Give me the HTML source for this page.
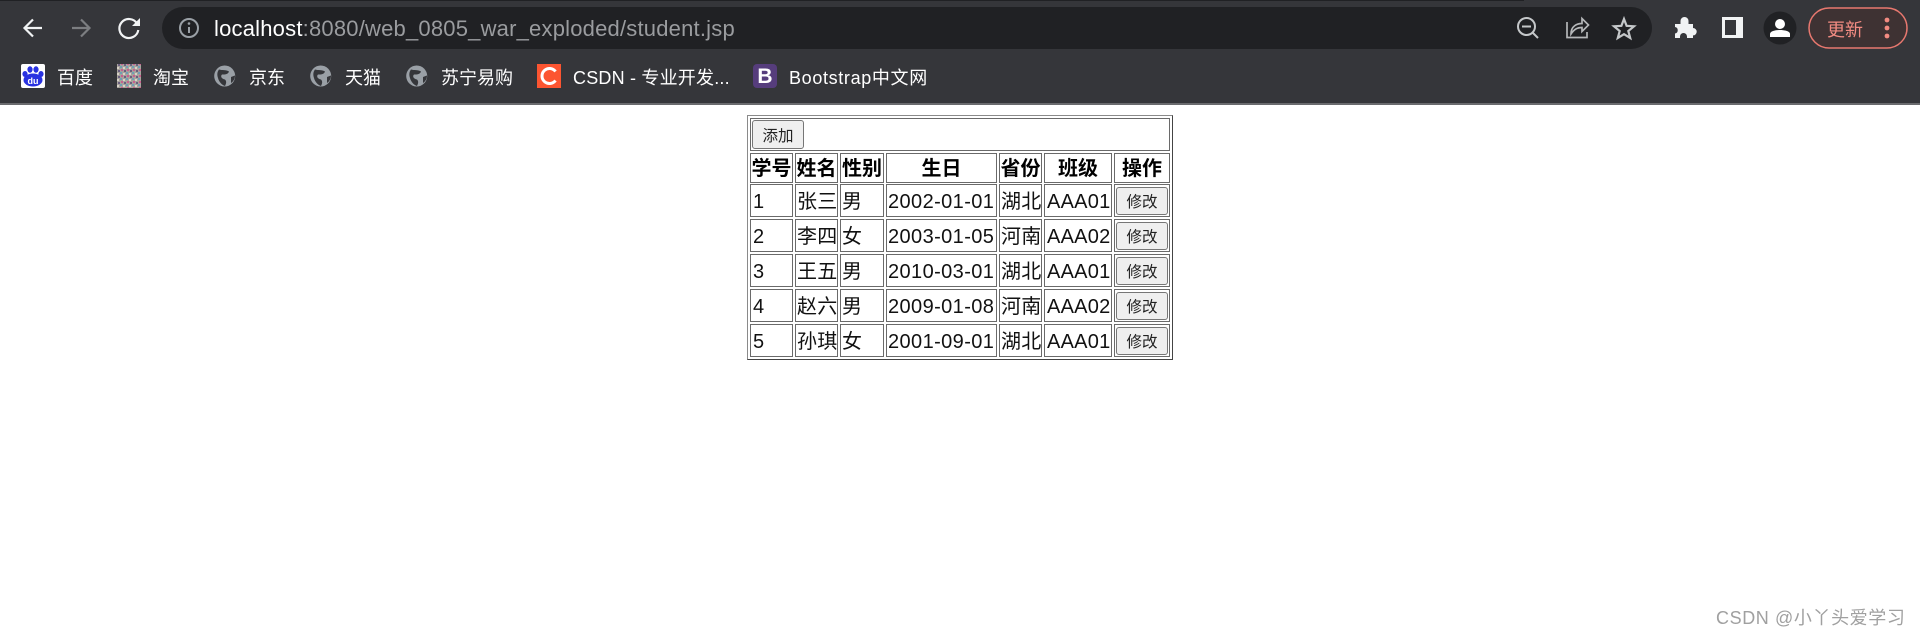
<!DOCTYPE html>
<html lang="zh"><head><meta charset="utf-8"><title>student</title>
<style>
html,body{margin:0;padding:0;background:#fff;width:1920px;height:636px;overflow:hidden}
body{position:relative;font-family:"Liberation Sans","Noto Sans CJK SC",sans-serif;color:#000}
.a{position:absolute}
.bm{position:absolute;top:66px;line-height:24px;font-size:18px;color:#fff;white-space:nowrap}
.c{position:absolute;box-sizing:border-box;border:1px solid #6a6a6a;font-size:20px;line-height:35px;padding-left:1px;white-space:nowrap;letter-spacing:.25px;color:#111}
.d{letter-spacing:.4px}
.n{padding-left:2px}
.h{font-weight:bold;text-align:center;padding:0;line-height:31px;letter-spacing:0;color:#000}
.b{position:absolute;box-sizing:border-box;background:#efefef;border:1px solid #767676;border-radius:3px;font-size:15.500px;text-align:center;color:#222}
</style></head><body>
<div class="a" style="left:0;top:0;width:1920px;height:103px;background:#35363a"></div>
<div class="a" style="left:0;top:0;width:1524px;height:1px;background:#202124"></div>
<div class="a" style="left:0;top:103px;width:1920px;height:2px;background:#6a6b6e"></div>
<div class="a" style="left:162px;top:7px;width:1490px;height:42px;background:#202124;border-radius:21px"></div>

<svg class="a" style="left:0;top:0" width="1920" height="103" fill="none">
<defs><pattern id="n" width="6" height="6" patternUnits="userSpaceOnUse"><rect width="6" height="6" fill="#a7a29c"/><rect width="2" height="2" fill="#6f9fb5"/><rect x="3" y="1" width="2" height="2" fill="#d8d2c8"/><rect x="1" y="3" width="2" height="2" fill="#c9608f"/><rect x="4" y="4" width="2" height="2" fill="#6a5f7f"/></pattern></defs>
<path d="M42 28H25M33 19.500L24.500 28L33 36.500" stroke="#f1f3f4" stroke-width="2.200"/>
<path d="M72 28H89M81 19.500L89.500 28L81 36.500" stroke="#7c7e81" stroke-width="2.200"/>
<path d="M137 23.500A9.500 9.500 0 1 0 138.300 30" stroke="#f1f3f4" stroke-width="2.200"/><path d="M140 18V26H132Z" fill="#f1f3f4"/>
<circle cx="189" cy="28" r="9" stroke="#9aa0a6" stroke-width="2"/><path d="M189 27V33" stroke="#9aa0a6" stroke-width="2"/><circle cx="189" cy="23.500" r="1.300" fill="#9aa0a6"/>
<circle cx="1526.500" cy="26.500" r="8.500" stroke="#c4c7c9" stroke-width="2"/><path d="M1522 26.500H1531M1532.500 32.500L1538 38" stroke="#c4c7c9" stroke-width="2"/>
<path d="M1567 22V37.500H1587V32" stroke="#b5b7b9" stroke-width="1.700"/><path d="M1571 34C1571 26 1577 23.500 1582 23.500V18.500L1588.500 25L1582 31.500V27.500C1577 27.500 1574 29.500 1571 34Z" stroke="#b5b7b9" stroke-width="1.700"/>
<path d="M1624 19L1626.600 25.800L1634 26.300L1628.300 31L1630.200 38L1624 34.200L1617.800 38L1619.700 31L1614 26.300L1621.400 25.800Z" stroke="#c4c7c9" stroke-width="2.200"/>
<path d="M1675 24H1680.500V21A4 4 0 0 1 1688.500 21V24H1693V28A3.700 3.700 0 0 1 1693 35.400V38H1687V36.500A3.500 3.500 0 0 0 1680 36.500V38H1675V33.500A3.300 3.300 0 0 0 1675 27Z" fill="#f1f3f4"/>
<path fill-rule="evenodd" d="M1722 17H1743V38H1722ZM1725 20V35H1736V20Z" fill="#f1f3f4"/>
<circle cx="1780" cy="28" r="16.500" fill="#202124"/><circle cx="1780" cy="24" r="5" fill="#fff"/><path d="M1770 37V34C1770 31 1776 30 1780 30C1784 30 1790 31 1790 34V37Z" fill="#fff"/>
<rect x="1809" y="8" width="98" height="40" rx="20" fill="#3e3233" stroke="#e8786f" stroke-width="1.500"/>
<circle cx="1887" cy="20" r="2.400" fill="#f28b82"/><circle cx="1887" cy="28" r="2.400" fill="#f28b82"/><circle cx="1887" cy="36" r="2.400" fill="#f28b82"/>
<rect x="21" y="64" width="24" height="24" rx="2" fill="#fff"/>
<ellipse cx="33" cy="80" rx="9.500" ry="6.500" fill="#2932e1"/><ellipse cx="25" cy="74" rx="2.600" ry="3" fill="#2932e1"/><ellipse cx="30" cy="69.500" rx="2.600" ry="3.200" fill="#2932e1"/><ellipse cx="36" cy="69.500" rx="2.600" ry="3.200" fill="#2932e1"/><ellipse cx="41" cy="74" rx="2.600" ry="3" fill="#2932e1"/>
<rect x="117" y="64" width="24" height="24" fill="url(#n)"/>
<g id="g"><circle cx="224.700" cy="76" r="10.500" fill="#9aa0a6"/><path d="M219 69.500C222 70.500 226 69.500 229 71.500C228 74.500 225 74.500 222 74.500C220 76.500 222 79 225 79.500C227 81.500 226 84 225 86C222 85 219 82 218 78C217 75 217 72 219 69.500ZM231 77L235 75.500C235 78 234 81 231 83Z" fill="#35363a"/></g>
<use href="#g" x="96"/><use href="#g" x="192"/>
<rect x="537" y="64" width="24" height="24" fill="#fc5531"/>
<path d="M555.500 71.500A7.500 7.500 0 1 0 555.500 80.500" stroke="#fff" stroke-width="3"/>
<rect x="753" y="64" width="24" height="24" rx="4" fill="#563d7c"/>
</svg>
<div class="a" style="left:27px;top:77px;width:12px;text-align:center;font-size:9px;line-height:9px;font-weight:bold;color:#fff">du</div>
<div class="a" style="left:753px;top:65px;width:24px;line-height:24px;text-align:center;font-size:21px;font-weight:bold;color:#fff">B</div>

<div class="a" style="left:214px;top:16px;font-size:22px;line-height:26px;white-space:nowrap;color:#9a9c9f;letter-spacing:.2px"><span style="color:#fff">localhost</span>:8080/web_0805_war_exploded/student.jsp</div>
<div class="a" style="left:1827px;top:18px;font-size:18px;line-height:24px;color:#f28b82">更新</div>

<div class="bm" style="left:57px">百度</div>
<div class="bm" style="left:153px">淘宝</div>
<div class="bm" style="left:249px">京东</div>
<div class="bm" style="left:345px">天猫</div>
<div class="bm" style="left:441px">苏宁易购</div>
<div class="bm" style="left:573px;letter-spacing:.2px">CSDN - 专业开发...</div>
<div class="bm" style="left:789px;letter-spacing:.65px">Bootstrap中文网</div>

<div class="a" style="left:747px;top:115px;width:426px;height:245px;box-sizing:border-box;border:1px solid;border-color:#8a8a8a #444 #444 #8a8a8a"></div>
<div class="c" style="left:750px;top:118px;width:420px;height:33px"></div>
<div class="b" style="left:752px;top:120px;width:52px;height:29px;line-height:31px">添加</div>

<div class="c h" style="left:750px;top:153px;width:43px;height:30px">学号</div>
<div class="c h" style="left:795px;top:153px;width:43px;height:30px">姓名</div>
<div class="c h" style="left:840px;top:153px;width:44px;height:30px">性别</div>
<div class="c h" style="left:886px;top:153px;width:111px;height:30px">生日</div>
<div class="c h" style="left:999px;top:153px;width:43px;height:30px">省份</div>
<div class="c h" style="left:1044px;top:153px;width:68px;height:30px">班级</div>
<div class="c h" style="left:1114px;top:153px;width:56px;height:30px">操作</div>

<div class="c n" style="left:750px;top:184px;width:43px;height:33px">1</div>
<div class="c" style="left:795px;top:184px;width:43px;height:33px">张三</div>
<div class="c" style="left:840px;top:184px;width:44px;height:33px">男</div>
<div class="c d" style="left:886px;top:184px;width:111px;height:33px">2002-01-01</div>
<div class="c" style="left:999px;top:184px;width:43px;height:33px">湖北</div>
<div class="c n" style="left:1044px;top:184px;width:68px;height:33px">AAA01</div>
<div class="c" style="left:1114px;top:184px;width:56px;height:33px"></div>
<div class="b" style="left:1116px;top:187px;width:52px;height:28px;line-height:29px">修改</div>

<div class="c n" style="left:750px;top:219px;width:43px;height:33px">2</div>
<div class="c" style="left:795px;top:219px;width:43px;height:33px">李四</div>
<div class="c" style="left:840px;top:219px;width:44px;height:33px">女</div>
<div class="c d" style="left:886px;top:219px;width:111px;height:33px">2003-01-05</div>
<div class="c" style="left:999px;top:219px;width:43px;height:33px">河南</div>
<div class="c n" style="left:1044px;top:219px;width:68px;height:33px">AAA02</div>
<div class="c" style="left:1114px;top:219px;width:56px;height:33px"></div>
<div class="b" style="left:1116px;top:222px;width:52px;height:28px;line-height:29px">修改</div>

<div class="c n" style="left:750px;top:254px;width:43px;height:33px">3</div>
<div class="c" style="left:795px;top:254px;width:43px;height:33px">王五</div>
<div class="c" style="left:840px;top:254px;width:44px;height:33px">男</div>
<div class="c d" style="left:886px;top:254px;width:111px;height:33px">2010-03-01</div>
<div class="c" style="left:999px;top:254px;width:43px;height:33px">湖北</div>
<div class="c n" style="left:1044px;top:254px;width:68px;height:33px">AAA01</div>
<div class="c" style="left:1114px;top:254px;width:56px;height:33px"></div>
<div class="b" style="left:1116px;top:257px;width:52px;height:28px;line-height:29px">修改</div>

<div class="c n" style="left:750px;top:289px;width:43px;height:33px">4</div>
<div class="c" style="left:795px;top:289px;width:43px;height:33px">赵六</div>
<div class="c" style="left:840px;top:289px;width:44px;height:33px">男</div>
<div class="c d" style="left:886px;top:289px;width:111px;height:33px">2009-01-08</div>
<div class="c" style="left:999px;top:289px;width:43px;height:33px">河南</div>
<div class="c n" style="left:1044px;top:289px;width:68px;height:33px">AAA02</div>
<div class="c" style="left:1114px;top:289px;width:56px;height:33px"></div>
<div class="b" style="left:1116px;top:292px;width:52px;height:28px;line-height:29px">修改</div>

<div class="c n" style="left:750px;top:324px;width:43px;height:33px">5</div>
<div class="c" style="left:795px;top:324px;width:43px;height:33px">孙琪</div>
<div class="c" style="left:840px;top:324px;width:44px;height:33px">女</div>
<div class="c d" style="left:886px;top:324px;width:111px;height:33px">2001-09-01</div>
<div class="c" style="left:999px;top:324px;width:43px;height:33px">湖北</div>
<div class="c n" style="left:1044px;top:324px;width:68px;height:33px">AAA01</div>
<div class="c" style="left:1114px;top:324px;width:56px;height:33px"></div>
<div class="b" style="left:1116px;top:327px;width:52px;height:28px;line-height:29px">修改</div>

<div class="a" style="left:1716px;top:606px;font-size:18px;line-height:24px;letter-spacing:.6px;color:#a0a0a0;white-space:nowrap">CSDN @小丫头爱学习</div>
</body></html>
